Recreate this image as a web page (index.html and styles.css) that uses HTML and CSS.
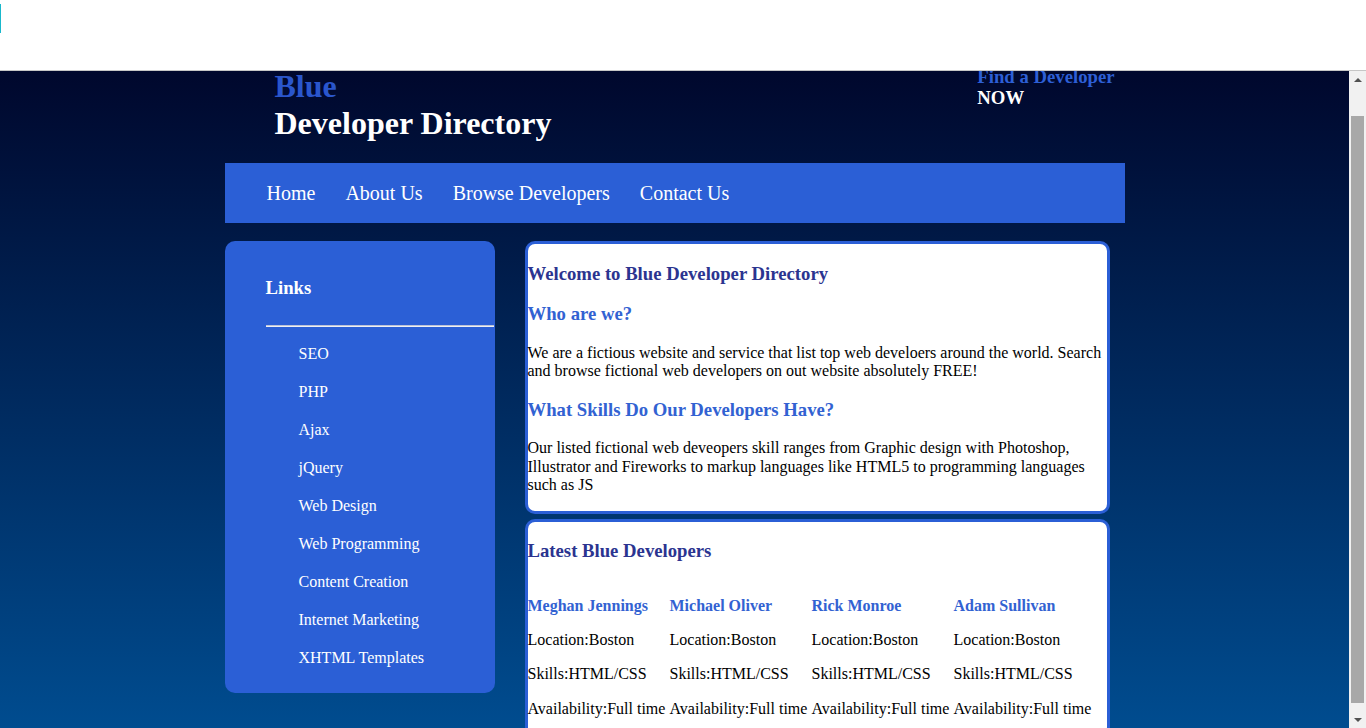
FILE: index.html
```
<!DOCTYPE html>
<html lang="en">
<head>
<meta charset="utf-8">
<title>Blue Developer Directory</title>
<link rel="stylesheet" href="styles.css">
</head>
<body>
<div class="topbar"><span class="caret"></span></div>
<div class="frame">
  <div class="viewport" id="vp">
    <div class="page">
      <div class="wrap">
        <header class="masthead">
          <h1 class="logo"><span class="logo-blue">Blue</span><br>Developer Directory</h1>
          <h3 class="cta"><span class="cta-blue">Find a Developer</span><br>NOW</h3>
        </header>
        <nav class="nav">
          <a href="#">Home</a>
          <a href="#">About Us</a>
          <a href="#">Browse Developers</a>
          <a href="#">Contact Us</a>
        </nav>
        <div class="content">
          <aside class="sidebar">
            <h3 class="side-title">Links</h3>
            <hr class="side-rule">
            <ul class="side-list">
              <li><a href="#">SEO</a></li>
              <li><a href="#">PHP</a></li>
              <li><a href="#">Ajax</a></li>
              <li><a href="#">jQuery</a></li>
              <li><a href="#">Web Design</a></li>
              <li><a href="#">Web Programming</a></li>
              <li><a href="#">Content Creation</a></li>
              <li><a href="#">Internet Marketing</a></li>
              <li><a href="#">XHTML Templates</a></li>
            </ul>
          </aside>
          <main class="main">
            <section class="box">
              <h3 class="box-title">Welcome to Blue Developer Directory</h3>
              <h3 class="box-sub">Who are we?</h3>
              <p class="box-text">We are a fictious website and service that list top web develoers around the world. Search and browse fictional web developers on out website absolutely FREE!</p>
              <h3 class="box-sub">What Skills Do Our Developers Have?</h3>
              <p class="box-text">Our listed fictional web deveopers skill ranges from Graphic design with Photoshop, Illustrator and Fireworks to markup languages like HTML5 to programming languages such as JS</p>
            </section>
            <section class="box">
              <h3 class="box-title">Latest Blue Developers</h3>
              <div class="devs">
                <div class="dev">
                  <p class="dev-name">Meghan Jennings</p>
                  <p class="box-text">Location:Boston</p>
                  <p class="box-text">Skills:HTML/CSS</p>
                  <p class="box-text">Availability:Full time</p>
                </div>
                <div class="dev">
                  <p class="dev-name">Michael Oliver</p>
                  <p class="box-text">Location:Boston</p>
                  <p class="box-text">Skills:HTML/CSS</p>
                  <p class="box-text">Availability:Full time</p>
                </div>
                <div class="dev">
                  <p class="dev-name">Rick Monroe</p>
                  <p class="box-text">Location:Boston</p>
                  <p class="box-text">Skills:HTML/CSS</p>
                  <p class="box-text">Availability:Full time</p>
                </div>
                <div class="dev">
                  <p class="dev-name">Adam Sullivan</p>
                  <p class="box-text">Location:Boston</p>
                  <p class="box-text">Skills:HTML/CSS</p>
                  <p class="box-text">Availability:Full time</p>
                </div>
              </div>
            </section>
          </main>
        </div>
      </div>
    </div>
  </div>
  <div class="scrollbar">
    <div class="sb-btn"><span class="sb-arrow-up"></span></div>
    <div class="sb-gap-top"></div>
    <div class="sb-thumb"></div>
    <div class="sb-gap-bottom"></div>
    <div class="sb-btn"><span class="sb-arrow-down"></span></div>
  </div>
</div>
<script src="script.js"></script>
</body>
</html>
```
FILE: styles.css
```
html, body {
  margin: 0;
  padding: 0;
  height: 100%;
  overflow: hidden;
  background: #ffffff;
  font-family: "Liberation Serif", "Times New Roman", serif;
}

.topbar {
  height: 70px;
  border-bottom: 1px solid #c6c6c6;
  background: #ffffff;
  position: relative;
}

.caret {
  position: absolute;
  left: 0;
  top: 4px;
  width: 1px;
  height: 29px;
  background: #19b8cc;
}

.frame {
  display: flex;
  height: 657px;
}

.viewport {
  flex: 1;
  min-width: 0;
  overflow: hidden;
}

.scrollbar {
  width: 17px;
  flex: none;
  display: flex;
  flex-direction: column;
  background: #f1f1f1;
}

.sb-btn {
  height: 17px;
  flex: none;
  display: flex;
  align-items: center;
  justify-content: center;
}

.sb-arrow-up {
  width: 0;
  height: 0;
  border-left: 4px solid transparent;
  border-right: 4px solid transparent;
  border-bottom: 4px solid #505050;
}

.sb-arrow-down {
  width: 0;
  height: 0;
  border-left: 4px solid transparent;
  border-right: 4px solid transparent;
  border-top: 4px solid #505050;
}

.sb-gap-top {
  height: 28px;
  flex: none;
}

.sb-gap-bottom {
  height: 8px;
  flex: none;
}

.sb-thumb {
  flex: 1;
  margin: 0 2px;
  background: #a8a8a8;
}

.page {
  padding: 8px;
  background: linear-gradient(to bottom, #000428 0%, #004e92 100%);
}

.wrap {
  width: 900px;
  margin: 0 auto;
}

.masthead {
  display: flex;
  justify-content: space-between;
  align-items: flex-start;
}

.logo {
  margin: 21.44px 0;
  padding-left: 50px;
  font-size: 32px;
  font-weight: bold;
  color: #ffffff;
  line-height: 36.8px;
}

.logo-blue {
  color: #2a56cc;
}

.cta {
  margin: 18.72px 0;
  padding-right: 10px;
  white-space: nowrap;
  font-size: 18.72px;
  font-weight: bold;
  color: #ffffff;
  line-height: 21.5px;
}

.cta-blue {
  color: #2d5fd6;
}

.nav {
  display: flex;
  align-items: center;
  gap: 30px;
  height: 60px;
  padding-left: 42px;
  padding-top: 1px;
  box-sizing: border-box;
  background: #2b5fd6;
}

.nav a {
  color: #ffffff;
  text-decoration: none;
  font-size: 20px;
}

.content {
  display: flex;
  align-items: flex-start;
  gap: 30px;
  margin-top: 18px;
}

.sidebar {
  width: 228px;
  padding: 17px 1px 16px 41px;
  background: #2b5fd6;
  border-radius: 10px;
  color: #ffffff;
}

.side-title {
  margin: 18.72px 0 0;
  font-size: 18.72px;
  line-height: 21.5px;
  font-weight: bold;
}

.side-rule {
  margin: 26.5px 0 8px;
  height: 0;
  border: 0;
  border-top: 1px solid #bcc3d6;
  border-bottom: 1px solid #eef0f6;
}

.side-list {
  list-style: none;
  margin: 0;
  padding: 0 0 0 33px;
}

.side-list li {
  padding: 10px 0;
  line-height: 18px;
  font-size: 16px;
}

.side-list a {
  color: #ffffff;
  text-decoration: none;
}

.main {
  width: 585px;
  display: flex;
  flex-direction: column;
  gap: 5px;
}

.box {
  background: #ffffff;
  border: 3px solid #2b5fd6;
  border-radius: 10px;
  display: flow-root;
}

.box-title {
  margin: 18.72px 0;
  font-size: 18.72px;
  line-height: 21.5px;
  font-weight: bold;
  color: #2b3490;
}

.box-sub {
  margin: 18.72px 0;
  font-size: 18.72px;
  line-height: 21.5px;
  font-weight: bold;
  color: #3262d2;
}

.box-text {
  margin: 16px 0;
  font-size: 16px;
  line-height: 18.4px;
  color: #000000;
}

.devs {
  display: grid;
  grid-template-columns: repeat(4, 142px);
}

.dev-name {
  margin: 16px 0;
  font-size: 16px;
  line-height: 18.4px;
  font-weight: bold;
  color: #3262d2;
}
```
FILE: script.js
```
document.getElementById('vp').scrollTop = 32;
```
